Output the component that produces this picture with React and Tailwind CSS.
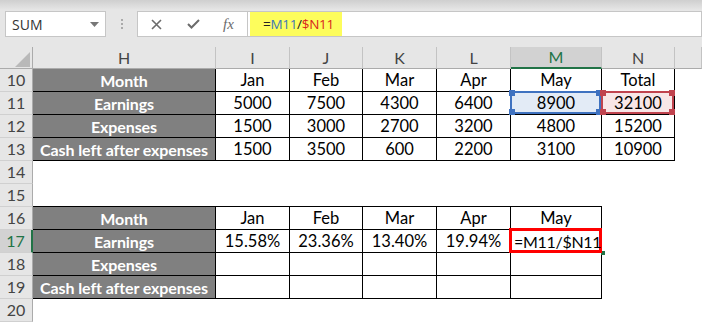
import React from "react";

const COLS = [
  { k: "H", w: 183 },
  { k: "I", w: 74 },
  { k: "J", w: 73 },
  { k: "K", w: 74 },
  { k: "L", w: 74 },
  { k: "M", w: 91 },
  { k: "N", w: 73 },
  { k: "O", w: 27 },
];

const T1 = [
  ["Month", "Jan", "Feb", "Mar", "Apr", "May", "Total"],
  ["Earnings", "5000", "7500", "4300", "6400", "8900", "32100"],
  ["Expenses", "1500", "3000", "2700", "3200", "4800", "15200"],
  ["Cash left after expenses", "1500", "3500", "600", "2200", "3100", "10900"],
];
const T2 = [
  ["Month", "Jan", "Feb", "Mar", "Apr", "May"],
  ["Earnings", "15.58%", "23.36%", "13.40%", "19.94%", ""],
  ["Expenses", "", "", "", "", ""],
  ["Cash left after expenses", "", "", "", "", ""],
];

function Corners({ color }) {
  return (
    <>
      <span className={`absolute -left-[3px] -top-[3px] w-[6px] h-[6px] ${color}`} />
      <span className={`absolute -right-[3px] -top-[3px] w-[6px] h-[6px] ${color}`} />
      <span className={`absolute -left-[3px] -bottom-[3px] w-[6px] h-[6px] ${color}`} />
      <span className={`absolute -right-[3px] -bottom-[3px] w-[6px] h-[6px] ${color}`} />
    </>
  );
}

function Cell({ r, c }) {
  const col = COLS[c];
  let text = "";
  let bordered = false;
  let head = false;
  let bottomOnly = false;
  if (r >= 10 && r <= 13 && c <= 6) {
    bordered = true;
    text = T1[r - 10][c];
    head = c === 0;
  } else if (r >= 16 && r <= 19 && c <= 5) {
    bordered = true;
    text = T2[r - 16][c];
    head = c === 0;
  } else if (r === 15 && c <= 5) {
    bottomOnly = true;
  }
  const isM11 = r === 11 && c === 5;
  const isN11 = r === 11 && c === 6;
  const isM17 = r === 17 && c === 5;
  let cls = "relative box-border h-[23px] flex items-center justify-center shrink-0 leading-none pt-[1px]";
  if (bordered) cls += " border-r border-b border-black";
  if (bottomOnly) cls += " border-b border-black";
  if (head) cls += " bg-[#808080] text-white font-bold text-[16px] tracking-[-0.1px]";
  else cls += " text-black text-[16.5px]";
  if (isM11) cls += " bg-[#e3ebf6]";
  if (isN11) cls += " bg-[#f8e6e7]";
  return (
    <div className={cls} style={{ width: col.w }}>
      {isM11 && (
        <div className="absolute -left-[1px] -top-[1px] right-[0px] bottom-[0px] border-2 border-[#3f72c0]">
          <Corners color="bg-[#3f72c0]" />
        </div>
      )}
      {isN11 && (
        <div className="absolute -left-[1px] -top-[1px] right-[0px] bottom-[0px] border-2 border-[#c0434e]">
          <Corners color="bg-[#c0434e]" />
        </div>
      )}
      {isM17 ? (
        <>
          <div className="absolute -left-[2px] -top-[2px] -right-[1px] -bottom-[1px] border-[3px] border-[#ff0000] z-20" />
          <span className="absolute left-[3px] top-[4px] whitespace-nowrap z-30 text-[16px] tracking-[-0.3px]">=M11/$N11</span>
          <span className="absolute -right-[4px] -bottom-[3px] w-[4px] h-[4px] bg-[#217346] z-10" />
        </>
      ) : (
        <span className="relative whitespace-nowrap">{text}</span>
      )}
    </div>
  );
}

export default function App() {
  const rows = [10, 11, 12, 13, 14, 15, 16, 17, 18, 19, 20];
  return (
    <div
      className="w-[702px] h-[322px] overflow-hidden bg-white"
      style={{ fontFamily: "Lato, 'Liberation Sans', sans-serif" }}
    >
      {/* toolbar */}
      <div className="h-[47px] bg-[#e6e6e6] relative">
        <div className="h-[10px] bg-gradient-to-b from-[#cfcfcf] to-[#e6e6e6]" />
        <div className="flex items-start">
          <div className="ml-[5px] mt-[1px] w-[101px] h-[26px] box-border bg-white border border-[#c6c6c6] flex items-center justify-between pl-[6px] pr-[6px]">
            <span className="text-[14px] text-[#333]" style={{ fontFamily: "'Open Sans', sans-serif" }}>SUM</span>
            <svg width="9" height="5" viewBox="0 0 9 5"><path d="M0 0h9L4.5 5z" fill="#777" /></svg>
          </div>
          <div className="w-[31px] h-[26px] mt-[1px] flex flex-col items-center justify-center gap-[2px]">
            <span className="w-[2px] h-[2px] bg-[#aaa]" />
            <span className="w-[2px] h-[2px] bg-[#aaa]" />
            <span className="w-[2px] h-[2px] bg-[#aaa]" />
          </div>
          <div className="mt-[1px] h-[26px] flex-1 box-border bg-white border border-[#c6c6c6] flex items-stretch">
            <div className="w-[110px] flex items-center border-r border-[#c6c6c6]">
              <svg className="ml-[13px]" width="11" height="11" viewBox="0 0 11 11">
                <path d="M1 1L10 10M10 1L1 10" stroke="#6b6b6b" strokeWidth="1.6" />
              </svg>
              <svg className="ml-[25px]" width="13" height="10" viewBox="0 0 13 10">
                <path d="M1 5L4.5 8.5L12 1" stroke="#6b6b6b" strokeWidth="2" fill="none" />
              </svg>
              <span
                className="ml-[23px] text-[15px] italic text-[#6b6b6b] leading-none"
                style={{ fontFamily: "'Liberation Serif', serif" }}
              >
                fx
              </span>
            </div>
            <div className="ml-[2px] w-[92px] bg-[#fdfd5c] flex items-center pl-[13px]">
              <span className="text-[13.5px] whitespace-nowrap tracking-[-0.3px]" style={{ fontFamily: "'Open Sans', sans-serif" }}>
                <span className="text-[#222]">=</span>
                <span className="text-[#3e77b8]">M11</span>
                <span className="text-[#222]">/</span>
                <span className="text-[#d9261c]">$N11</span>
              </span>
            </div>
          </div>
        </div>
      </div>
      {/* column header */}
      <div className="flex h-[22px] bg-[#e6e6e6]">
        <div className="w-[33px] shrink-0 box-border border-r border-b border-[#ababab] relative">
          <svg className="absolute left-[15px] top-[5px]" width="15" height="15" viewBox="0 0 15 15">
            <path d="M15 0V15H0z" fill="#b9b9b9" />
          </svg>
        </div>
        {COLS.map((c) => (
          <div
            key={c.k}
            className={`shrink-0 box-border flex items-center justify-center text-[16px] border-r border-[#c3c3c3] ${
              c.k === "M"
                ? "bg-[#d2d2d2] text-[#217346] border-b-2 border-b-[#217346]"
                : "text-[#444] border-b border-b-[#ababab]"
            }`}
            style={{ width: c.w }}
          >
            {c.k === "O" ? "" : c.k}
          </div>
        ))}
      </div>
      {rows.map((r) => (
        <div key={r} className="flex">
          <div
            className={`w-[33px] h-[23px] shrink-0 box-border flex items-center justify-center text-[16px] border-b border-b-[#d0d0d0] ${
              r === 17
                ? "bg-[#d2d2d2] text-[#217346] border-r-2 border-r-[#217346]"
                : "bg-[#e6e6e6] text-[#444] border-r border-r-[#ababab]"
            }`}
          >
            {r}
          </div>
          {COLS.map((c, i) => (
            <Cell key={c.k} r={r} c={i} />
          ))}
        </div>
      ))}
    </div>
  );
}
